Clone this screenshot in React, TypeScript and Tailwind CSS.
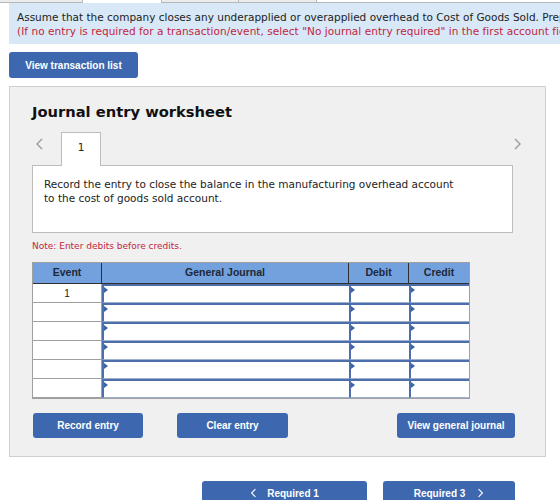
import { ReactNode } from 'react';

const verdana = { fontFamily: '"DejaVu Sans", Verdana, sans-serif' };
const arial = { fontFamily: '"Liberation Sans", Arial, Helvetica, sans-serif' };

// Thin chevrons used for the entry pager and the requirement buttons
function Chevron({ dir, color = '#9a9a9a', className }: { dir: 'left' | 'right'; color?: string; className?: string }) {
  return (
    <svg width="9" height="12" viewBox="0 0 9 12" className={className}>
      <polyline
        points={dir === 'left' ? '7,1 2,6 7,11' : '2,1 7,6 2,11'}
        fill="none"
        stroke={color}
        strokeWidth="1.4"
      />
    </svg>
  );
}

function BlueButton({ children, className }: { children: ReactNode; className?: string }) {
  return (
    <button
      style={arial}
      className={`flex items-center justify-center bg-[#3d68b0] text-white font-bold text-[10px] rounded-[3px] ${className ?? ''}`}
    >
      {children}
    </button>
  );
}

// One editable cell: blue inset frame with the little marker in the corner
function InputCell() {
  return (
    <div className="relative bg-white border-t-2 border-l-2 border-[#4c6fac] border-b border-b-[#9fb1cf]">
      <span className="absolute top-[1px] left-0 w-0 h-0 border-t-[3px] border-b-[3px] border-l-[4px] border-t-transparent border-b-transparent border-l-[#3a63aa]" />
    </div>
  );
}

const topTabs = [
  { w: 'w-[83px]', active: false },
  { w: 'w-[79px]', active: true },
  { w: 'w-[77px]', active: false },
  { w: 'w-[78px]', active: false },
];

export default function App() {
  const rows = ['1', '', '', '', '', ''];

  return (
    <div style={verdana} className="w-[560px] h-[500px] overflow-hidden bg-white text-[#222]">
      {/* requirement tabs, mostly scrolled out of view */}
      <div className="flex h-[3px]">
        {topTabs.map((t, i) => (
          <div
            key={i}
            className={`${t.w} h-full border-r border-[#b8b8b8] ${t.active ? 'bg-white' : 'bg-[#ececec] border-b border-b-[#b8b8b8]'}`}
          />
        ))}
        <div className="flex-1 border-b border-[#b8b8b8]" />
      </div>

      {/* instructions */}
      <div className="ml-[9px] w-[620px] h-[41px] bg-[#d9e8f6] pl-[8px] pt-[7px] text-[10.5px] leading-[14px] whitespace-nowrap">
        <p>Assume that the company closes any underapplied or overapplied overhead to Cost of Goods Sold. Prepare the journal entry.</p>
        <p className="text-[#c1253f] tracking-[0.05px]">
          (If no entry is required for a transaction/event, select "No journal entry required" in the first account field.)
        </p>
      </div>

      <BlueButton className="mt-[8px] ml-[9px] w-[129px] h-[26px]">View transaction list</BlueButton>

      {/* worksheet panel */}
      <div className="mt-[8px] ml-[9px] w-[537px] h-[371px] bg-[#f0f0f0] border border-[#cfcfcf] px-[22px] pt-[16px]">
        <h2 className="text-[14.7px] leading-[17px] font-bold text-[#111]">Journal entry worksheet</h2>

        <div className="mt-[12px] flex items-start h-[33px]">
          <Chevron dir="left" className="mt-[6px] ml-[3px]" />
          <div className="relative z-10 ml-[17px] w-[40px] h-[34px] bg-white border border-b-0 border-[#bdbdbd] flex justify-center pt-[7px] text-[10.5px]">
            1
          </div>
          <Chevron dir="right" className="mt-[6px] ml-auto mr-[1px]" />
        </div>

        <div className="w-[481px] h-[68px] bg-white border border-[#bdbdbd] px-[11px] pt-[11px] text-[10.5px] leading-[14px]">
          Record the entry to close the balance in the manufacturing overhead account
          <br />
          to the cost of goods sold account.
        </div>

        <p className="mt-[7px] text-[9px] leading-[12px] text-[#c1253f]">Note: Enter debits before credits.</p>

        {/* journal grid */}
        <div style={arial} className="mt-[10px] w-[438px] border border-[#a0a0a0]">
          <div className="grid grid-cols-[69px_247px_60px_1fr] h-[21px] bg-[#73a1de] border-b border-[#2f2f2f] text-[10.5px] font-bold text-[#1d2838]">
            <div className="flex items-center justify-center border-r border-[#2f2f2f]">Event</div>
            <div className="flex items-center justify-center border-r border-[#2f2f2f]">General Journal</div>
            <div className="flex items-center justify-center border-r border-[#2f2f2f]">Debit</div>
            <div className="flex items-center justify-center">Credit</div>
          </div>
          {rows.map((ev, i) => (
            <div key={i} className="grid grid-cols-[69px_247px_60px_1fr] h-[19px]">
              <div className="flex items-center justify-center bg-white border-r border-b border-[#a0a0a0] text-[10px]">
                {ev}
              </div>
              <InputCell />
              <InputCell />
              <InputCell />
            </div>
          ))}
        </div>

        <div className="mt-[14px] flex">
          <BlueButton className="ml-[1px] w-[110px] h-[25px]">Record entry</BlueButton>
          <BlueButton className="ml-[34px] w-[111px] h-[25px]">Clear entry</BlueButton>
          <BlueButton className="ml-[109px] w-[118px] h-[25px]">View general journal</BlueButton>
        </div>
      </div>

      {/* requirement navigation */}
      <div className="mt-[24px] flex">
        <BlueButton className="ml-[202px] w-[165px] h-[24px] text-[10.5px] gap-[10px]">
          <Chevron dir="left" color="#ffffff" className="w-[7px] h-[10px]" />
          <span>Required 1</span>
        </BlueButton>
        <BlueButton className="ml-[16px] w-[132px] h-[24px] text-[10.5px] gap-[12px]">
          <span>Required 3</span>
          <Chevron dir="right" color="#ffffff" className="w-[7px] h-[10px]" />
        </BlueButton>
      </div>
    </div>
  );
}
